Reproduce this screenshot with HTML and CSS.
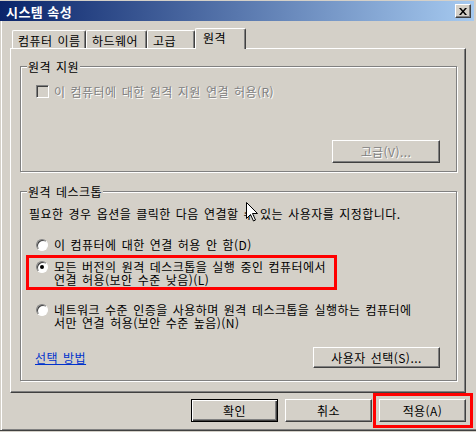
FILE: index.html
```html
<!DOCTYPE html>
<html lang="ko">
<head>
    <meta charset="UTF-8">
    <title>시스템 속성</title>
    <link rel="stylesheet" href="styles.css">
</head>
<body>

    <div class="window">

        <!-- Title bar -->
        <div class="titlebar">
            <span class="title">시스템 속성</span>
            <span class="close">
                <svg width="8" height="7" viewBox="0 0 8 7">
                    <path d="M0 0h2l2 2.5 2-2.5h2L5 3.5 8 7H6L4 4.5 2 7H0l3-3.5z" fill="#000"/>
                </svg>
            </span>
        </div>

        <!-- Tabs -->
        <div class="tabs">
            <div class="tab tab-name">컴퓨터 이름</div>
            <div class="tab tab-hw">하드웨어</div>
            <div class="tab tab-adv">고급</div>
            <div class="tab tab-remote active">원격</div>
        </div>

        <div class="panel">

            <!-- Remote Assistance -->
            <fieldset class="group assist">
                <legend>원격 지원</legend>
                <div class="group-body">
                    <div class="check disabled">
                        <span class="box"></span>
                        <span>이 컴퓨터에 대한 원격 지원 연결 허용(R)</span>
                    </div>
                    <div class="row-end">
                        <button class="btn btn-adv" disabled>고급(V)...</button>
                    </div>
                </div>
            </fieldset>

            <!-- Remote Desktop -->
            <fieldset class="group desktop">
                <legend>원격 데스크톱</legend>
                <div class="group-body">
                    <p class="hint">필요한 경우 옵션을 클릭한 다음 연결할 수 있는 사용자를 지정합니다.</p>
                    <div class="option opt-deny">
                        <span class="radio"></span>
                        <span>이 컴퓨터에 대한 연결 허용 안 함(D)</span>
                    </div>
                    <div class="option opt-any">
                        <span class="radio checked"></span>
                        <span class="lines">
                            <span>모든 버전의 원격 데스크톱을 실행 중인 컴퓨터에서</span>
                            <span>연결 허용(보안 수준 낮음)(L)</span>
                        </span>
                        <span class="mark"></span>
                    </div>
                    <div class="option opt-nla">
                        <span class="radio"></span>
                        <span class="lines">
                            <span>네트워크 수준 인증을 사용하며 원격 데스크톱을 실행하는 컴퓨터에</span>
                            <span>서만 연결 허용(보안 수준 높음)(N)</span>
                        </span>
                    </div>
                    <div class="footer-row">
                        <a href="#" class="link">선택 방법</a>
                        <button class="btn btn-users">사용자 선택(S)...</button>
                    </div>
                </div>
            </fieldset>

        </div>

        <!-- Dialog buttons -->
        <div class="actions">
            <button class="btn btn-default">확인</button>
            <button class="btn">취소</button>
            <button class="btn btn-apply">적용(A)<span class="mark"></span></button>
        </div>

        <!-- Mouse pointer -->
        <svg class="cursor" width="13" height="20" viewBox="0 0 13 20">
            <path d="M0.5 0.5V16.5L4.5 12.5L7.5 19L9.5 18L6.5 11.5H11.5Z" fill="#fff" stroke="#000" stroke-width="1"/>
        </svg>

    </div>

</body>
</html>
```

FILE: styles.css
```css
body {
    margin: 0;
    background-color: #d4d0c8;
    font-family: "Noto Sans CJK KR", "Liberation Sans", sans-serif;
    font-size: 12px;
    line-height: 13px;
    color: #000;
    letter-spacing: 0.45px;
    word-spacing: 1.3px;
}
.window {
    position: relative;
    width: 476px;
    height: 430px;
    box-sizing: border-box;
    background-color: #d4d0c8;
    border-bottom: 1px solid #404040;
    box-shadow: inset 1px 0 #d4d0c8, inset 2px 0 #fff, inset 0 -1px #808080;
}

/* title bar */
.titlebar {
    display: flex;
    align-items: center;
    height: 20px;
    margin: 1px 2px 0 0;
    background: linear-gradient(to right, #0a246a, #a6caf0);
}
.title {
    padding-left: 6px;
    color: #fff;
    font-weight: bold;
    font-size: 13px;
    word-spacing: 0;
}
.close {
    display: flex;
    align-items: center;
    justify-content: center;
    width: 16px;
    height: 14px;
    box-sizing: border-box;
    margin-left: auto;
    margin-right: 3px;
    background-color: #d4d0c8;
    border: 1px solid;
    border-color: #fff #404040 #404040 #fff;
    box-shadow: inset -1px -1px #808080;
}

/* tabs */
.tabs {
    display: flex;
    align-items: flex-end;
    height: 20px;
    margin-top: 7px;
    padding-left: 12px;
}
.tab {
    height: 18px;
    box-sizing: border-box;
    padding: 3px 0 0 5px;
    border-top: 1px solid #fff;
    border-left: 1px solid #fff;
    border-right: 1px solid #404040;
    border-radius: 2px 2px 0 0;
    box-shadow: inset -1px 0 #808080;
    background-color: #d4d0c8;
    white-space: nowrap;
}
.tab-name { width: 74px; }
.tab-hw { width: 61px; }
.tab-adv { width: 48px; }
.tab.active {
    position: relative;
    z-index: 1;
    width: 51px;
    height: 21px;
    margin-bottom: -1px;
    padding: 2px 0 0 7px;
}

/* tab page */
.panel {
    width: 456px;
    height: 345px;
    box-sizing: border-box;
    margin-left: 10px;
    padding: 11px 8px 0 9px;
    border: 1px solid;
    border-color: #fff #404040 #404040 #fff;
    box-shadow: inset -1px -1px #808080;
}
.group {
    margin: 0;
    padding: 0;
    min-width: 0;
    border: 1px solid #808080;
    box-shadow: inset 1px 1px #fff, 1px 1px #fff;
}
.group legend {
    margin-left: 6px;
    padding: 0 1px;
    background-color: #d4d0c8;
}
.desktop {
    margin-top: 13px;
}
.assist .group-body {
    padding: 12px 16px 8px 15px;
}
.desktop .group-body {
    padding: 9px 16px 12px 0;
}

/* checkbox */
.check {
    display: flex;
    align-items: center;
    gap: 5px;
    height: 13px;
}
.box {
    width: 13px;
    height: 13px;
    box-sizing: border-box;
    border: 1px solid;
    border-color: #808080 #fff #fff #808080;
    box-shadow: inset 1px 1px #404040, inset -1px -1px #d4d0c8;
}
.disabled {
    color: #808080;
    text-shadow: 1px 1px #fff;
}
.row-end {
    display: flex;
    justify-content: flex-end;
    margin-top: 42px;
}

/* buttons */
.btn {
    height: 23px;
    box-sizing: border-box;
    padding: 0;
    font: inherit;
    letter-spacing: inherit;
    word-spacing: inherit;
    color: #000;
    background-color: #d4d0c8;
    border: 1px solid;
    border-color: #fff #404040 #404040 #fff;
    box-shadow: inset -1px -1px #808080;
    border-radius: 0;
}
.btn:disabled {
    color: #808080;
    text-shadow: 1px 1px #fff;
}
.btn-adv { width: 108px; }
.btn-users {
    width: 127px;
    height: 21px;
}

/* remote desktop options */
.hint {
    margin: 0;
    padding-left: 8px;
    white-space: nowrap;
}
.option {
    position: relative;
    display: flex;
    align-items: flex-start;
    gap: 6px;
    margin-left: 15px;
    white-space: nowrap;
}
.lines {
    display: flex;
    flex-direction: column;
}
.opt-deny { margin-top: 18px; }
.opt-any { margin-top: 9px; }
.opt-nla { margin-top: 17px; }
.radio {
    position: relative;
    flex: none;
    width: 12px;
    height: 12px;
    margin-top: 1px;
    box-sizing: border-box;
    border-radius: 50%;
    border: 1px solid;
    border-color: #808080 #fff #fff #808080;
    background-color: #fff;
    box-shadow: inset 1px 1px #404040;
}
.radio.checked::after {
    content: "";
    position: absolute;
    left: 3px;
    top: 3px;
    width: 4px;
    height: 4px;
    border-radius: 50%;
    background-color: #000;
}
.mark {
    position: absolute;
    box-sizing: border-box;
    border: 3px solid #f00;
}
.opt-any .mark {
    left: -10px;
    top: -5px;
    width: 311px;
    height: 35px;
}
.footer-row {
    display: flex;
    align-items: center;
    justify-content: space-between;
    margin-top: 18px;
    padding-left: 14px;
}
.link {
    color: #0033cc;
    text-decoration: underline;
}

/* dialog buttons */
.actions {
    display: flex;
    justify-content: flex-end;
    gap: 7px;
    margin-top: 6px;
    padding-right: 10px;
}
.actions .btn {
    width: 87px;
}
.btn-default {
    border: 1px solid #000;
    box-shadow: inset 1px 1px #fff, inset -1px -1px #404040, inset -2px -2px #808080;
}
.btn-apply {
    position: relative;
}
.btn-apply .mark {
    left: -7px;
    top: -7px;
    right: -8px;
    bottom: -7px;
}

.cursor {
    position: absolute;
    left: 246px;
    top: 201px;
}
```
